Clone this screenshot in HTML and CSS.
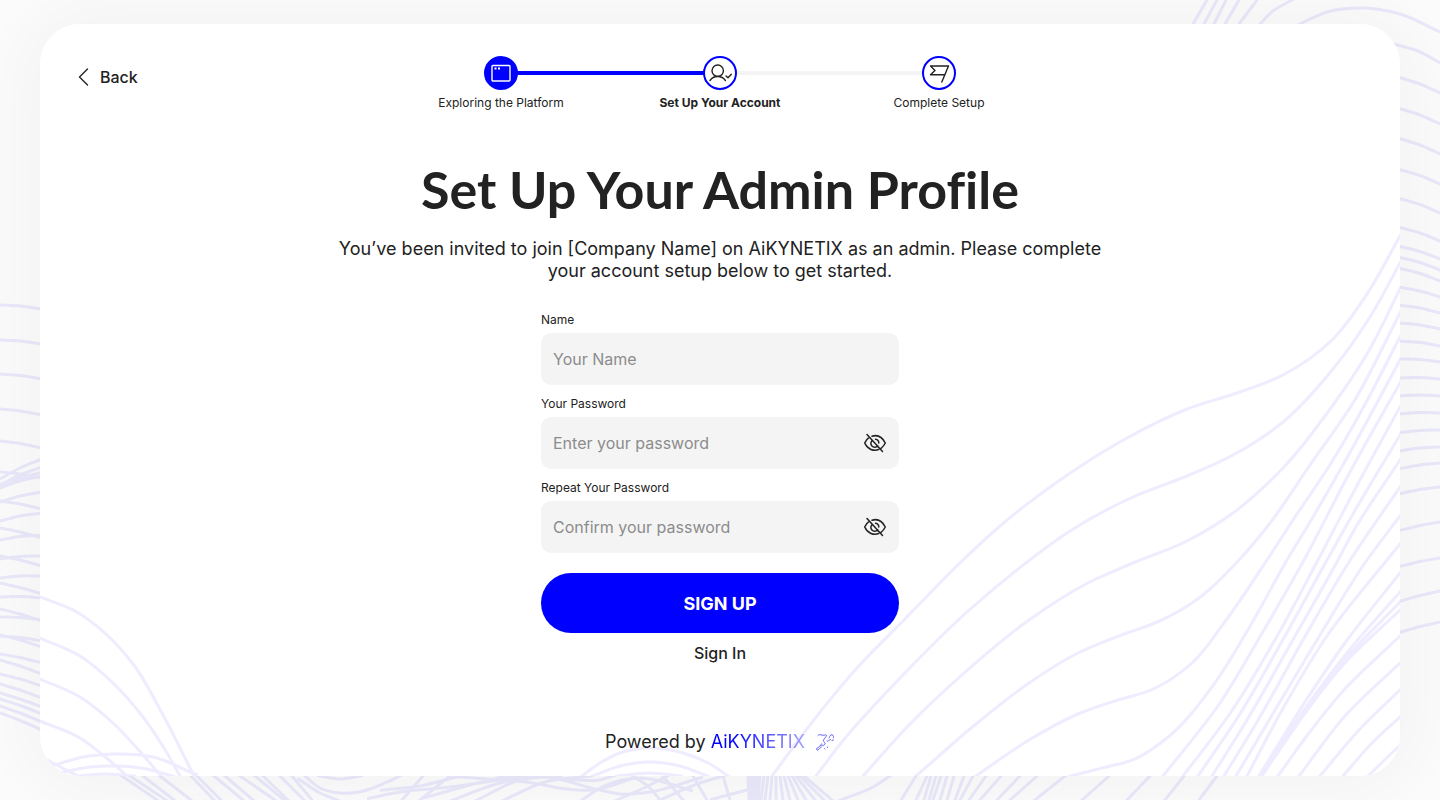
FILE: index.html
```html
<!DOCTYPE html>
<html lang="en">
<head>
<meta charset="utf-8">
<meta name="viewport" content="width=device-width, initial-scale=1">
<title>Set Up Your Admin Profile</title>
<link rel="stylesheet" href="styles.css">
</head>
<body>
<svg class="waves waves-page" id="page-waves" viewBox="0 0 1440 800" preserveAspectRatio="none" aria-hidden="true"></svg>
<div class="card">
  <svg class="waves waves-card" id="card-waves" viewBox="40 24 1360 752" preserveAspectRatio="none" aria-hidden="true"></svg>

  <header class="top">
    <button class="back" type="button">
      <svg width="16" height="20" viewBox="0 0 16 20" fill="none" stroke="#222" stroke-width="1.4" stroke-linecap="round" stroke-linejoin="round" aria-hidden="true"><path d="M11.5 2 3.5 10l8 8"/></svg>
      Back
    </button>
    <ol class="steps">
      <li class="step done">
        <span class="dot"><svg width="24" height="24" viewBox="0 0 24 24" fill="none" stroke="#fff" stroke-width="1.4" aria-hidden="true"><rect x="3" y="4.500" width="18" height="15.500" rx="1"/><path d="M5.500 7.500h2M9 7.500h2" stroke-width="2"/></svg></span>
        <span class="step-name">Exploring the Platform</span>
      </li>
      <li class="step current" aria-current="step">
        <span class="dot"><svg width="26" height="26" viewBox="0 0 26 26" fill="none" stroke="#222" stroke-width="1.400" stroke-linecap="round" stroke-linejoin="round" aria-hidden="true"><circle cx="10.700" cy="10.700" r="5.700"/><path d="M3 20.500c1.500-2.300 4.200-4 7.700-4s6.200 1.700 7.700 4M19 16l2 1.800 3.300-3.600"/></svg></span>
        <span class="step-name">Set Up Your Account</span>
      </li>
      <li class="step">
        <span class="dot"><svg width="26" height="26" viewBox="0 0 26 26" fill="none" stroke="#222" stroke-width="1.400" stroke-linejoin="round" stroke-linecap="round" aria-hidden="true"><path d="M4.500 6h18l-6.700 16M19 14.800H4.500L9 10.500 4.500 6"/></svg></span>
        <span class="step-name">Complete Setup</span>
      </li>
    </ol>
  </header>

  <main class="content">
    <h1>Set Up Your Admin Profile</h1>
    <p class="intro">You’ve been invited to join [Company Name] on AiKYNETIX as an admin. Please complete your account setup below to get started.</p>
    <form class="form">
      <div class="field">
        <label for="name">Name</label>
        <input id="name" type="text" placeholder="Your Name">
      </div>
      <div class="field">
        <label for="password">Your Password</label>
        <div class="secret">
          <input id="password" type="password" placeholder="Enter your password">
          <button class="eye" type="button" aria-label="Show password"><svg width="24" height="24" viewBox="0 0 24 24" fill="none" stroke="#222" stroke-width="1.500" stroke-linecap="round" stroke-linejoin="round" aria-hidden="true"><path d="M4 3.500 19.500 20.500M9 5.200C16 3 20 7.500 22.300 12c-1 2-2.500 4-4.300 5.300M6.200 6.300C4.300 7.600 2.500 9.700 1.700 12c3 6.500 9 8.500 14 6.500M12.500 8.200a3.800 3.800 0 0 1 3.300 3.800M9.500 9.300a3.800 3.800 0 1 0 5.200 5.400"/></svg></button>
        </div>
      </div>
      <div class="field">
        <label for="confirm">Repeat Your Password</label>
        <div class="secret">
          <input id="confirm" type="password" placeholder="Confirm your password">
          <button class="eye" type="button" aria-label="Show password"><svg width="24" height="24" viewBox="0 0 24 24" fill="none" stroke="#222" stroke-width="1.500" stroke-linecap="round" stroke-linejoin="round" aria-hidden="true"><path d="M4 3.500 19.500 20.500M9 5.200C16 3 20 7.500 22.300 12c-1 2-2.500 4-4.300 5.300M6.200 6.300C4.300 7.600 2.500 9.700 1.700 12c3 6.500 9 8.500 14 6.500M12.500 8.200a3.800 3.800 0 0 1 3.300 3.800M9.500 9.300a3.800 3.800 0 1 0 5.200 5.400"/></svg></button>
        </div>
      </div>
      <button class="submit" type="submit">SIGN UP</button>
      <a class="signin" href="#">Sign In</a>
    </form>
  </main>

  <footer class="powered">
    <span>Powered by <span class="brand">AiKYNETIX</span></span>
    <svg width="20" height="20" viewBox="0 0 20 20" fill="none" stroke="#5552f5" stroke-width=".9" stroke-linecap="round" aria-hidden="true"><path d="M3 3.500c2-2 4 .5 7-.500 1.500-.500 2 .500 1 1.500L8.500 8c-1 1.500 2 2 1.500 4-.5 1.500-2.500 1.500-4 2" stroke-dasharray="2.500 .7"/><path d="M12 9c1.500 1 2-1.500 3.500-1.500M7 12c-2 0-1 2-3 3s-3 1.500-2 3c2 .5 2-2 4-2.500" stroke-dasharray="2 .6"/><path d="M18.500 5.500c.5-2-1-3.200-2.600-2.500-1.500.7-1 2.300-1.900 3M17 8.500l1.500-.5M9.500 16.500l.5.500M12.500 15v.5"/></svg>
  </footer>
</div>
<script src="waves.js"></script>
</body>
</html>
```

FILE: styles.css
```css
* { box-sizing: border-box; }

body {
  margin: 0;
  min-height: 100vh;
  padding: 24px 40px;
  display: flex;
  position: relative;
  overflow-x: hidden;
  background: #fcfcfc;
  color: #222;
  font-family: Inter, "Liberation Sans", sans-serif;
}

button, input { font: inherit; color: inherit; }
button { border: 0; padding: 0; background: none; cursor: pointer; }

.waves {
  position: absolute;
  inset: 0;
  width: 100%;
  height: 100%;
  fill: none;
  stroke-width: 3;
}
.waves-page { stroke: rgba(60, 40, 240, 0.09); z-index: 1; }
.waves-card { stroke: #eeecfe; z-index: -1; }

.card {
  position: relative;
  z-index: 2;
  isolation: isolate;
  flex: 1;
  display: flex;
  flex-direction: column;
  padding: 32px 36px 22px;
  overflow: hidden;
  border-radius: 40px;
  background: #fff;
}
body::before {
  content: "";
  position: absolute;
  inset: 24px 40px;
  border-radius: 40px;
  box-shadow: 0 0 80px 20px rgba(0, 0, 0, 0.04);
}

.top {
  display: grid;
  grid-template-columns: 1fr auto 1fr;
  align-items: start;
}
.back {
  justify-self: start;
  display: flex;
  align-items: center;
  gap: 8px;
  margin-top: 11px;
  font-size: 16px;
  line-height: 20px;
  font-weight: 500;
}

.steps {
  display: grid;
  grid-template-columns: repeat(3, 219px);
  margin: 0;
  padding: 0;
  list-style: none;
}
.step {
  position: relative;
  display: flex;
  flex-direction: column;
  align-items: center;
  gap: 5px;
  font-size: 12px;
  line-height: 16px;
}
.step + .step::before {
  content: "";
  position: absolute;
  top: 15px;
  right: 50%;
  width: 100%;
  height: 4px;
  background: #f4f4f4;
}
.step.current::before { background: #00f; }
.dot {
  position: relative;
  z-index: 1;
  display: grid;
  place-items: center;
  width: 34px;
  height: 34px;
  border: 2px solid #00f;
  border-radius: 50%;
  background: #fff;
}
.step:first-child { z-index: 1; }
.done .dot { background: #00f; }
.current .step-name { font-weight: 700; }

.content {
  display: flex;
  flex-direction: column;
  align-items: center;
  margin-top: 48px;
}
h1 {
  margin: 0;
  font-family: Lato, sans-serif;
  font-size: 52px;
  line-height: 60px;
  font-weight: 700;
  font-variant-ligatures: none;
  text-align: center;
}
.intro {
  max-width: 780px;
  margin: 19px 0 0;
  font-size: 18px;
  line-height: 22px;
  text-align: center;
}

.form {
  display: flex;
  flex-direction: column;
  gap: 12px;
  width: 100%;
  max-width: 358px;
  margin-top: 30px;
}
.field {
  display: flex;
  flex-direction: column;
  gap: 5px;
}
.field + .field { margin-top: -1px; }
.field label {
  font-size: 12px;
  line-height: 16px;
}
.field input {
  width: 100%;
  height: 52px;
  padding: 0 12px;
  border: 0;
  border-radius: 10px;
  background: #f4f4f4;
  font-size: 16px;
}
.field input::placeholder { color: #8c8c8c; opacity: 1; }
.secret { position: relative; }
.secret input { padding-right: 48px; }
.eye {
  position: absolute;
  top: 14px;
  right: 12px;
  width: 24px;
  height: 24px;
}
.eye svg { display: block; }

.submit {
  height: 60px;
  margin-top: 8px;
  border-radius: 30px;
  background: #00f;
  color: #fff;
  font-size: 18px;
  font-weight: 700;
}
.signin {
  align-self: center;
  margin-top: -2px;
  color: inherit;
  font-size: 16px;
  line-height: 20px;
  font-weight: 500;
  text-decoration: none;
}

.powered {
  display: flex;
  align-items: center;
  justify-content: center;
  gap: 10px;
  margin-top: auto;
  font-size: 18px;
  line-height: 24px;
}
.brand {
  background: linear-gradient(90deg, #00f 20%, #a5a3ff 100%);
  -webkit-background-clip: text;
  background-clip: text;
  color: transparent;
}
```

FILE: waves.js
```js
// Each row is one wave: a list of x,y points joined by a smooth curve.
const cardWaves = [
  [1400,236, 1367,294, 1333,339, 1283,375, 1240,392, 1187,409, 1127,438, 1060,480, 1000,526, 963,560, 905,619, 857,668, 800,738, 772,776],
  [1400,263, 1370,317, 1333,369, 1283,422, 1233,455, 1187,476, 1133,497, 1067,533, 1031,559, 967,612, 902,676, 841,743, 816,776],
  [1400,289, 1367,354, 1333,405, 1283,468, 1233,513, 1187,541, 1133,563, 1086,584, 1029,620, 963,674, 910,724, 863,776],
  [1400,313, 1353,403, 1310,465, 1267,527, 1239,560, 1192,603, 1155,623, 1127,633, 1078,653, 1029,683, 976,724, 916,776],
  [1400,337, 1363,408, 1333,460, 1293,520, 1267,560, 1224,623, 1192,663, 1151,690, 1118,700, 1078,714, 1029,740, 976,776],
  [1400,360, 1353,447, 1313,517, 1287,560, 1249,628, 1212,687, 1167,738, 1135,759, 1102,768, 1071,776],
  [1400,383, 1350,472, 1304,560, 1261,635, 1220,703, 1163,776],
  [1400,407, 1360,480, 1318,560, 1276,638, 1229,715, 1183,776],
  [1400,435, 1357,507, 1327,560, 1280,645, 1238,717, 1198,776],
  [1400,460, 1353,532, 1338,560, 1290,645, 1247,720, 1212,776],
  [1400,487, 1349,562, 1303,640, 1257,722, 1224,776],
  [1400,516, 1367,560, 1314,645, 1268,722, 1236,776],
  [1400,544, 1387,560, 1327,636, 1281,712, 1247,776],
  [1400,573, 1345,643, 1303,705, 1259,776],
  [1400,592, 1351,648, 1304,710, 1260,776],
  [1400,602, 1350,654, 1304,713, 1261,776],
  [1400,610, 1342,666, 1298,723, 1262,776],
  [1400,636, 1343,691, 1306,737, 1278,776],
  [1400,663, 1345,716, 1299,776],
  [1400,690, 1359,730, 1320,776],
  [1400,717, 1371,744, 1343,776],
  [1400,745, 1368,776],
  [40,597, 75,611, 107,635, 133,664, 163,715, 194,776],
  [40,638, 80,656, 113,683, 143,717, 167,753, 180,776],
  [40,679, 80,697, 113,723, 143,755, 161,776],
  [40,721, 80,738, 103,755, 127,776],
  [49,761, 78,776],
  [55,765, 83,757, 117,754, 153,757, 195,774],
  [63,772, 90,767, 117,766, 147,769, 172,776],
  [77,776, 105,774, 133,776],
  [582,776, 600,763, 623,752, 653,748, 683,753, 710,764, 728,776],
  [593,776, 620,766, 650,762, 680,766, 707,776],
  [618,776, 650,773, 680,776]
];

const pageWaves = [
  [1207,0, 1193,24], [1217,0, 1204,24], [1226,0, 1214,24], [1239,0, 1225,24], [1257,0, 1239,24],
  [1292,0, 1273,11, 1260,24],
  [1300,24, 1327,12, 1363,8, 1400,14, 1440,32],
  [1390,43, 1418,51, 1440,63],
  [582,800, 604,786, 640,778, 690,790],
  [300,780, 320,793, 337,800],
  [305,776, 320,788, 340,793, 367,790, 387,782, 400,776],
  [320,776, 340,779, 360,776],
  [370,798, 400,792, 450,787, 500,780, 533,776],
  [383,790, 420,786, 460,776],
  [402,800, 423,776], [420,800, 450,776],
  [427,797, 470,785, 507,776],
  [453,800, 500,783, 550,776],
  [477,800, 520,780, 560,776],
  [460,777, 533,783, 567,789, 590,790, 607,787, 633,778],
  [500,776, 547,777, 600,790, 620,794, 650,792, 700,778],
  [533,776, 577,780, 600,780, 613,776],
  [504,800, 545,782, 590,776],
  [617,800, 650,785, 667,776],
  [660,800, 700,783, 723,776],
  [713,799, 747,790],
  [633,776, 650,788, 660,800], [663,776, 683,800], [693,776, 707,800], [723,776, 730,800],
  [841,800, 873,787, 890,776], [916,776, 901,800]
];

// Short stretches seen beside the card: y at the left end, y at the right end.
const leftEdge = [
  [305,309], [340,344], [374,379], [409,415], [441,448], [472,478], [501,509], [528,538],
  [556,566], [583,594], [609,621], [635,647], [660,674], [684,698], [693,707], [699,714],
  [706,722], [713,730], [479,459], [485,467], [487,472], [488,476], [502,492], [521,513],
  [540,535], [559,556], [578,576], [597,598], [617,620], [636,641], [654,663], [674,686]
];
const rightEdge = [
  [77,93], [108,124], [138,154], [169,184], [198,213], [227,241], [246,259], [257,270],
  [268,281], [287,297], [305,313], [323,329], [341,346], [359,362], [378,379], [396,396],
  [414,413], [433,430], [451,447], [469,463], [494,487], [531,522], [567,558], [602,591],
  [633,622]
];
// Stretches under the card: x at the top, x at the bottom.
const bottomEdge = [
  [122,157], [130,166], [143,174], [160,191], [191,214], [197,221], [214,243], [225,253],
  [240,275], [255,284], [263,288], [280,304], [292,312],
  [748,749], [751,751], [754,753], [757,755], [760,758], [764,761], [768,765], [772,770],
  [776,776], [780,783], [784,790], [788,798], [792,806], [796,815], [800,824], [804,832],
  [927,916], [931,924], [936,929], [941,933], [947,940], [954,947], [964,955], [973,960],
  [986,969], [1001,980], [1020,997], [1037,1010], [1065,1035], [1109,1082], [1150,1127],
  [1184,1165], [1217,1199]
];
leftEdge.forEach(([a, b]) => pageWaves.push([0, a, 20, (a + b) / 2 - 1, 42, b]));
rightEdge.forEach(([a, b]) => pageWaves.push([1398, a, 1420, (a + b) / 2 - 1, 1440, b]));
bottomEdge.forEach(([a, b]) => pageWaves.push([a, 776, b, 800]));

function smoothPath(row) {
  const p = [];
  for (let i = 0; i < row.length; i += 2) p.push([row[i], row[i + 1]]);
  const last = p.length - 1;
  const dist = (a, b) => Math.hypot(b[0] - a[0], b[1] - a[1]);
  // Unit direction of the wave at each point, weighted towards the nearer neighbour.
  const dir = p.map((q, i) => {
    const a = p[Math.max(i - 1, 0)], c = p[Math.min(i + 1, last)];
    const la = dist(a, q) || 1, lc = dist(q, c) || 1;
    const x = (q[0] - a[0]) / la * lc + (c[0] - q[0]) / lc * la;
    const y = (q[1] - a[1]) / la * lc + (c[1] - q[1]) / lc * la;
    const n = Math.hypot(x, y);
    return [x / n, y / n];
  });
  const move = (q, v, k) => [q[0] + v[0] * k, q[1] + v[1] * k];
  // Run the ends on a little so that they are cut by the edge of the surface.
  let d = `M${move(p[0], dir[0], -3)}L${p[0]}`;
  for (let i = 0; i < last; i++) {
    const k = dist(p[i], p[i + 1]) / 3;
    d += `C${move(p[i], dir[i], k)} ${move(p[i + 1], dir[i + 1], -k)} ${p[i + 1]}`;
  }
  return d + `L${move(p[last], dir[last], 3)}`;
}

function draw(id, rows) {
  const path = document.createElementNS("http://www.w3.org/2000/svg", "path");
  path.setAttribute("d", rows.map(smoothPath).join(""));
  document.getElementById(id).appendChild(path);
}

draw("card-waves", cardWaves);
draw("page-waves", pageWaves);
```
